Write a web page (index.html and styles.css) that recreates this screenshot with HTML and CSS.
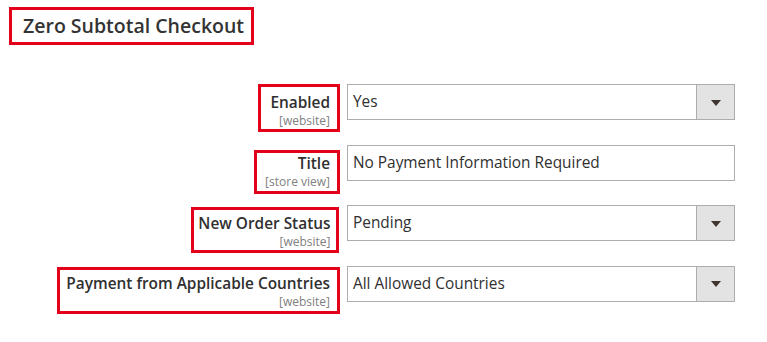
FILE: index.html
```html
<!DOCTYPE html>
<html>
<head>
    <meta charset="utf-8">
    <link rel="stylesheet" href="styles.css">
</head>
    <body>
        <h2 class="section-title">Zero Subtotal Checkout</h2>

        <div class="config-form">
            <div class="field-label label-enabled">
                <span class="label-text">Enabled</span>
                <span class="label-scope">[website]</span>
            </div>
            <div class="field-control select">
                <span class="value">Yes</span>
                <span class="select-btn"><span class="arrow"></span></span>
            </div>

            <div class="field-label label-title">
                <span class="label-text">Title</span>
                <span class="label-scope">[store view]</span>
            </div>
            <div class="field-control">
                <span class="value">No Payment Information Required</span>
            </div>

            <div class="field-label label-status">
                <span class="label-text">New Order Status</span>
                <span class="label-scope">[website]</span>
            </div>
            <div class="field-control select">
                <span class="value">Pending</span>
                <span class="select-btn"><span class="arrow"></span></span>
            </div>

            <div class="field-label label-countries">
                <span class="label-text">Payment from Applicable Countries</span>
                <span class="label-scope">[website]</span>
            </div>
            <div class="field-control select">
                <span class="value">All Allowed Countries</span>
                <span class="select-btn"><span class="arrow"></span></span>
            </div>
        </div>
    </body>
</html>
```

FILE: styles.css
```css
body {
    margin: 0;
    background: #fff;
    font-family: "Open Sans", "Liberation Sans", sans-serif;
    color: #303030;
}

.section-title {
    display: inline-block;
    margin: 7px 0 0 9px;
    padding: 0 7px 0 11px;
    border: 3px solid #e2001a;
    font-size: 19.5px;
    font-weight: 600;
    line-height: 32px;
    color: #333;
}

.config-form {
    display: grid;
    grid-template-columns: 340px 388px;
    grid-auto-rows: 60.67px;
    column-gap: 7px;
    margin-top: 39px;
}

/* labels, each boxed in red */
.field-label {
    justify-self: end;
    align-self: start;
    border: 3px solid #e2001a;
    text-align: right;
}
.label-text {
    display: block;
    font-size: 15.4px;
    font-weight: 600;
    line-height: 21px;
}
.label-scope {
    display: block;
    font-size: 12px;
    line-height: 16.5px;
    color: #808080;
}

.label-enabled {
    padding: 4.5px 7px 0 9px;
}
.label-title {
    margin-top: 5px;
    padding: 0 7px 1px 8px;
}
.label-status {
    margin-top: 1.7px;
    margin-right: 1px;
    padding: 2.8px 5.5px 0 4px;
}
.label-countries {
    margin-top: 1.3px;
    padding: 3.2px 7px 0 6.5px;
}

/* inputs / selects */
.field-control {
    display: flex;
    align-self: start;
    height: 36px;
    box-sizing: border-box;
    border: 1px solid #adadad;
    background: #fff;
}
.field-control .value {
    flex: 1;
    padding-left: 5px;
    font-size: 15.4px;
    line-height: 34px;
    color: #303030;
}
.select-btn {
    display: flex;
    align-items: center;
    justify-content: center;
    width: 37px;
    border-left: 1px solid #adadad;
    background: #e3e3e3;
}
.arrow {
    width: 0;
    height: 0;
    margin-top: 1px;
    border-left: 5px solid transparent;
    border-right: 5px solid transparent;
    border-top: 6px solid #41362f;
}
```
